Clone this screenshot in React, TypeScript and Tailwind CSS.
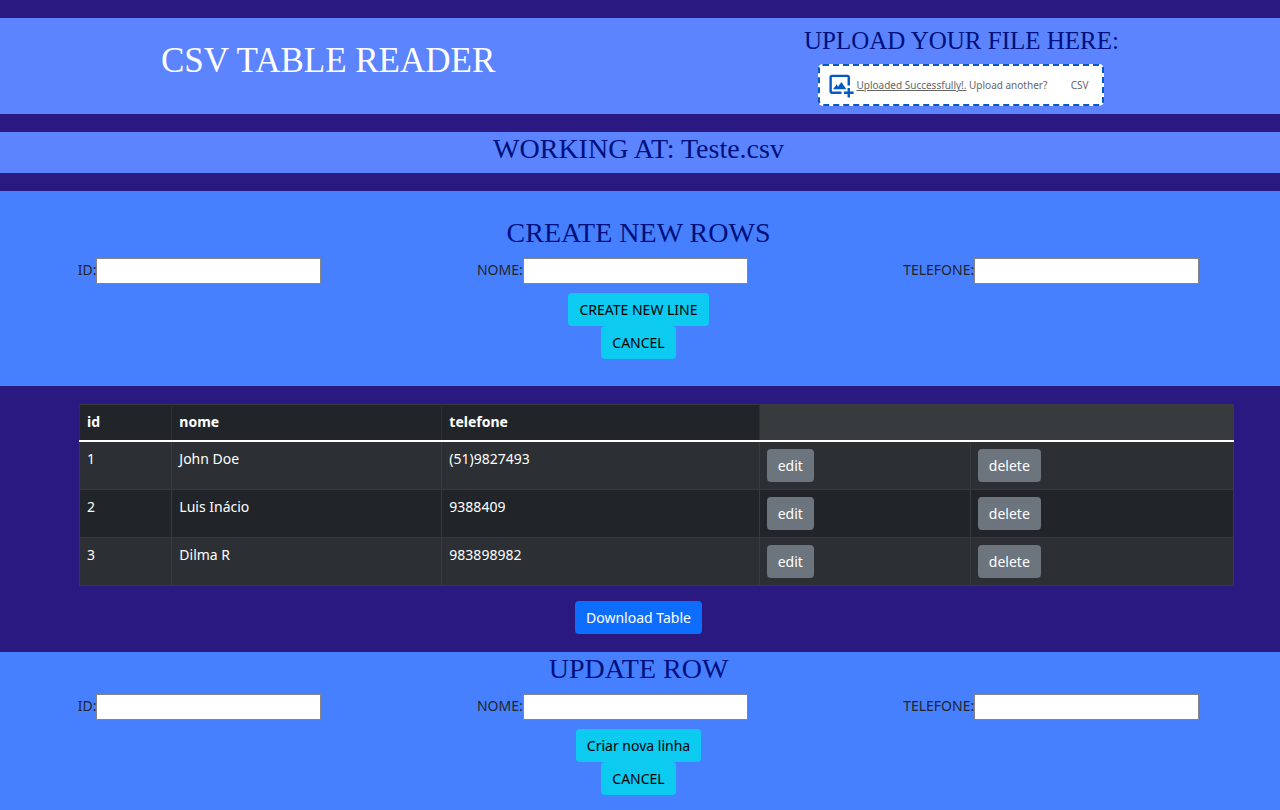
import React, { useId } from "react";

const rows = [
  { id: "1", nome: "John Doe", telefone: "(51)9827493" },
  { id: "2", nome: "Luis Inácio", telefone: "9388409" },
  { id: "3", nome: "Dilma R", telefone: "983898982" },
];

const fields = ["ID:", "NOME:", "TELEFONE:"];

function Field({ label }: { label: string }) {
  const id = useId();
  return (
    <div className="flex items-center">
      <label htmlFor={id} className="pb-[2px]">
        {label}
      </label>
      <input
        id={id}
        type="text"
        className="h-[26px] w-[225px] border border-[#858585] bg-white px-1 outline-none"
      />
    </div>
  );
}

function InfoButton({ children }: { children: React.ReactNode }) {
  return (
    <button
      type="button"
      className="rounded bg-[#0dcaf0] px-[11px] py-[6px] leading-[21px] text-black"
    >
      {children}
    </button>
  );
}

function RowForm({ title, action }: { title: string; action: string }) {
  return (
    <form className="flex flex-col items-center pr-[3px]" onSubmit={(e) => e.preventDefault()}>
      <h2 className="font-['Liberation_Serif',serif] text-[28px] leading-[34px] text-[#00107c]">
        {title}
      </h2>
      <div className="mt-2 mb-[9px] flex w-full justify-around">
        {fields.map((label) => (
          <Field key={label} label={label} />
        ))}
      </div>
      <InfoButton>{action}</InfoButton>
      <InfoButton>CANCEL</InfoButton>
    </form>
  );
}

function AddImageIcon() {
  return (
    <svg
      width="29"
      height="29"
      viewBox="0 0 32 32"
      fill="none"
      className="shrink-0"
      aria-hidden="true"
    >
      <path
        d="M5.33317 6.66667H22.6665V16H25.3332V6.66667C25.3332 5.196 24.1372 4 22.6665 4H5.33317C3.8625 4 2.6665 5.196 2.6665 6.66667V22.6667C2.6665 24.1373 3.8625 25.3333 5.33317 25.3333H15.9998V22.6667H5.33317V6.66667Z"
        fill="#0658c2"
      />
      <path
        d="M10.6665 14.6667L6.6665 20H21.3332L15.9998 12L11.9998 17.3333L10.6665 14.6667Z"
        fill="#0658c2"
      />
      <path
        d="M25.3332 18.6667H22.6665V22.6667H18.6665V25.3333H22.6665V29.3333H25.3332V25.3333H29.3332V22.6667H25.3332V18.6667Z"
        fill="#0658c2"
      />
    </svg>
  );
}

function RowButton({ children }: { children: React.ReactNode }) {
  return (
    <button
      type="button"
      className="block rounded bg-[#6c757d] px-[11px] py-[6px] leading-[21px] text-white"
    >
      {children}
    </button>
  );
}

export default function App() {
  return (
    <div className="min-h-screen bg-[#2b1982] pt-[18px] font-['Noto_Sans',sans-serif] text-[14px] leading-[22px] text-[#212529]">
      <header className="flex items-start justify-between bg-[#5c84ff] px-[161px] pt-[6px] pb-2">
        <h1 className="pt-[15px] font-['Liberation_Serif',serif] text-[35px] leading-[44px] text-white">
          CSV TABLE READER
        </h1>
        <div className="flex flex-col items-center">
          <h2 className="font-['Liberation_Serif',serif] text-[25px] leading-[34px] text-[#00107c]">
            UPLOAD YOUR FILE HERE:
          </h2>
          <label className="mt-[6px] flex h-[42px] w-[286px] cursor-pointer items-center rounded-[5px] border-2 border-dashed border-[#0658c2] bg-white pr-[14px] pl-[7px] text-[10px] text-[#666666]">
            <input type="file" accept=".csv" className="sr-only" />
            <AddImageIcon />
            <span className="grow">
              <span className="underline">Uploaded Successfully!.</span> Upload another?
            </span>
            <span>CSV</span>
          </label>
        </div>
      </header>

      <div className="mt-[18px] bg-[#5c84ff] pr-[3px] pb-[7px] text-center">
        <h2 className="font-['Liberation_Serif',serif] text-[28px] leading-[34px] text-[#00107c]">
          WORKING AT: Teste.csv
        </h2>
      </div>

      <section className="mt-[18px] bg-[#4780ff] pt-[25px] pb-[27px]">
        <RowForm title="CREATE NEW ROWS" action="CREATE NEW LINE" />
      </section>

      <section className="pt-[18px] pr-[46px] pb-[15px] pl-[79px]">
        <table className="w-full table-fixed border-collapse border border-[#373b3e] text-left text-white">
          <colgroup>
            <col className="w-[8%]" />
            <col className="w-[23.4%]" />
            <col className="w-[27.5%]" />
            <col className="w-[18.3%]" />
            <col />
          </colgroup>
          <thead>
            <tr className="h-[36px] border-b-2 border-white bg-[#212529]">
              {["id", "nome", "telefone"].map((name) => (
                <th key={name} className="border-x border-[#2c3034] px-[7px] font-bold">
                  {name}
                </th>
              ))}
              <td colSpan={2} className="bg-[#373b3e]" />
            </tr>
          </thead>
          <tbody>
            {rows.map((row) => (
              <tr
                key={row.id}
                className="border-b border-[#373b3e] odd:bg-[#2c3034] even:bg-[#212529]"
              >
                {[row.id, row.nome, row.telefone].map((value) => (
                  <td key={value} className="border-x border-[#373b3e] px-[7px] py-[6px] align-top">
                    {value}
                  </td>
                ))}
                <td className="border-x border-[#373b3e] p-[7px]">
                  <RowButton>edit</RowButton>
                </td>
                <td className="border-x border-[#373b3e] p-[7px]">
                  <RowButton>delete</RowButton>
                </td>
              </tr>
            ))}
          </tbody>
        </table>
      </section>

      <div className="flex justify-center pr-[3px] pb-[18px]">
        <button
          type="button"
          className="rounded bg-[#0d6efd] px-[11px] py-[6px] leading-[21px] text-white"
        >
          Download Table
        </button>
      </div>

      <section className="bg-[#4780ff] pb-[15px]">
        <RowForm title="UPDATE ROW" action="Criar nova linha" />
      </section>
    </div>
  );
}
